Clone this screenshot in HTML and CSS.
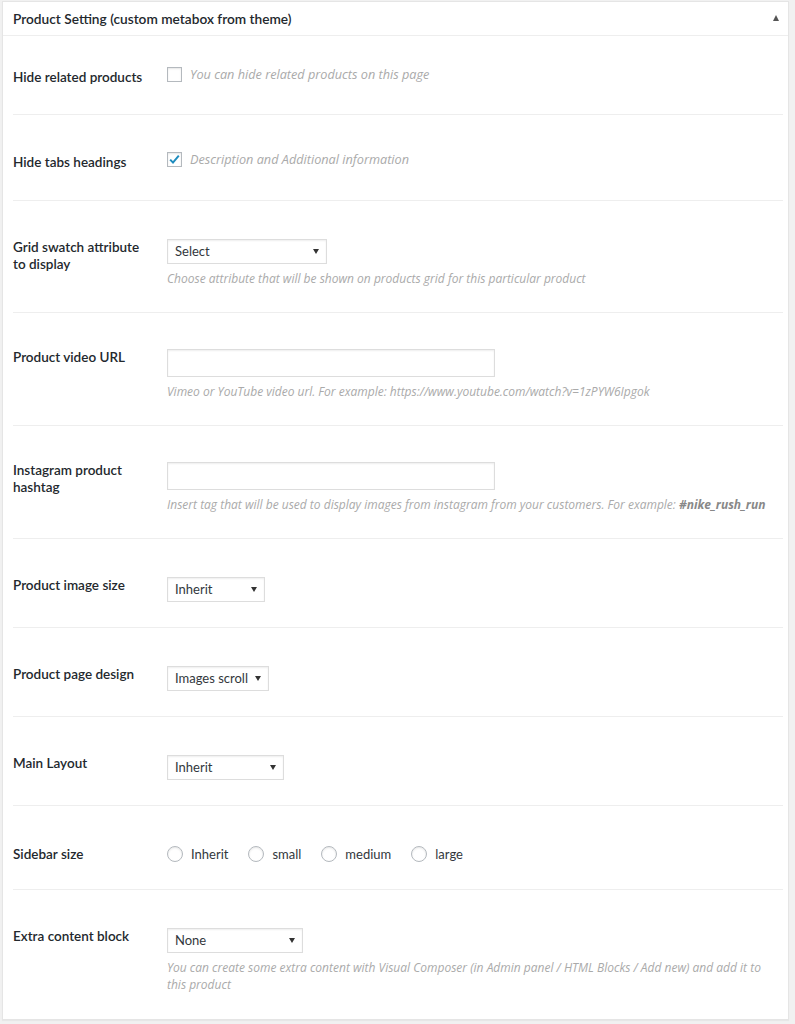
FILE: index.html
```html
<!DOCTYPE html>
<html lang="en">
<head>
    <meta charset="UTF-8">
    <meta name="viewport" content="width=device-width, initial-scale=1.0">
    <title>Product Setting</title>

    <link rel="stylesheet" href="styles.css">
</head>
<body>
    <div class="metabox">
        <div class="metabox-head">
            <h2>Product Setting (custom metabox from theme)</h2>
            <span class="toggle"></span>
        </div>
        <div class="metabox-body">
            <div class="field field-check field-first">
                <div class="field-label">Hide related products</div>
                <div class="field-control">
                    <label class="check">
                        <span class="box"></span>
                        <span class="check-text">You can hide related products on this page</span>
                    </label>
                </div>
            </div>

            <div class="field field-check">
                <div class="field-label">Hide tabs headings</div>
                <div class="field-control">
                    <label class="check">
                        <span class="box">
                            <svg width="13" height="13" viewBox="0 0 13 13"><path d="M2.2 6.6 L5 9.6 L10.8 2.6" fill="none" stroke="#1e8cbe" stroke-width="2"/></svg>
                        </span>
                        <span class="check-text">Description and Additional information</span>
                    </label>
                </div>
            </div>

            <div class="field">
                <div class="field-label">Grid swatch attribute to display</div>
                <div class="field-control">
                    <div class="select select-160">Select</div>
                    <p class="desc">Choose attribute that will be shown on products grid for this particular product</p>
                </div>
            </div>

            <div class="field field-input">
                <div class="field-label">Product video URL</div>
                <div class="field-control">
                    <input type="text" class="text-input">
                    <p class="desc">Vimeo or YouTube video url. For example: https://www.youtube.com/watch?v=1zPYW6Ipgok</p>
                </div>
            </div>

            <div class="field field-input">
                <div class="field-label">Instagram product hashtag</div>
                <div class="field-control">
                    <input type="text" class="text-input">
                    <p class="desc">Insert tag that will be used to display images from instagram from your customers. For example: <b>#nike_rush_run</b></p>
                </div>
            </div>

            <div class="field">
                <div class="field-label">Product image size</div>
                <div class="field-control">
                    <div class="select select-98">Inherit</div>
                </div>
            </div>

            <div class="field">
                <div class="field-label">Product page design</div>
                <div class="field-control">
                    <div class="select select-102">Images scroll</div>
                </div>
            </div>

            <div class="field">
                <div class="field-label">Main Layout</div>
                <div class="field-control">
                    <div class="select select-117">Inherit</div>
                </div>
            </div>

            <div class="field field-radio">
                <div class="field-label">Sidebar size</div>
                <div class="field-control radios">
                    <label class="radio"><span class="dot"></span>Inherit</label>
                    <label class="radio"><span class="dot"></span>small</label>
                    <label class="radio"><span class="dot"></span>medium</label>
                    <label class="radio"><span class="dot"></span>large</label>
                </div>
            </div>

            <div class="field">
                <div class="field-label">Extra content block</div>
                <div class="field-control">
                    <div class="select select-136">None</div>
                    <p class="desc">You can create some extra content with Visual Composer (in Admin panel / HTML Blocks / Add new) and add it to this product</p>
                </div>
            </div>
        </div>
    </div>
</body>
</html>
```

FILE: styles.css
```css
* {
    margin: 0;
    padding: 0;
    box-sizing: border-box;
}
body {
    background-color: #f1f1f1;
    font-family: Lato, "Open Sans", sans-serif;
    color: #23282d;
    padding: 1px 6px 4px 2px;
}
.metabox {
    background-color: #fff;
    border: 1px solid #e5e5e5;
    box-shadow: 0 1px 1px rgba(0, 0, 0, 0.04);
}
.metabox-head {
    height: 34px;
    display: flex;
    align-items: center;
    justify-content: space-between;
    padding: 0 9px 0 10px;
    border-bottom: 1px solid #eee;
}
.metabox-head h2 {
    font-size: 13.7px;
    font-weight: 600;
    color: #23282d;
}
.toggle {
    width: 0;
    height: 0;
    border-left: 3.5px solid transparent;
    border-right: 3.5px solid transparent;
    border-bottom: 6px solid #555;
    margin-top: -2px;
}
.metabox-body {
    padding: 0 5px 0 10px;
}
.field {
    display: flex;
    padding: 38px 0 25px;
    border-bottom: 1px solid #eee;
}
.field:last-child {
    border-bottom: none;
    padding-bottom: 26px;
}
.field-label {
    width: 154px;
    flex-shrink: 0;
    padding-right: 18px;
    font-size: 13.5px;
    font-weight: 600;
    line-height: 17px;
}
.field-control {
    flex: 1;
}

/* checkbox rows */
.field-check {
    padding: 39px 0 29px;
}
.field-check.field-first {
    padding: 33px 0 28px;
}
.field-check .field-control {
    margin-top: -3px;
}
.check {
    display: flex;
    align-items: center;
}
.box {
    width: 15px;
    height: 15px;
    border: 1px solid #b4b9be;
    box-shadow: inset 0 1px 2px rgba(0, 0, 0, 0.1);
    background: #fff;
    display: flex;
    align-items: center;
    justify-content: center;
    flex-shrink: 0;
}
.check-text {
    margin-left: 8px;
    font-family: "Open Sans", sans-serif;
    font-size: 12.7px;
    font-style: italic;
    line-height: 17px;
    color: #aaa;
}

/* selects and inputs */
.select {
    position: relative;
    height: 25px;
    border: 1px solid #ddd;
    box-shadow: inset 0 1px 2px rgba(0, 0, 0, 0.07);
    background: #fff;
    font-size: 13px;
    line-height: 23px;
    color: #32373c;
    padding-left: 7px;
}
.select::after {
    content: "";
    position: absolute;
    right: 7px;
    top: 9px;
    border-left: 3px solid transparent;
    border-right: 3px solid transparent;
    border-top: 5px solid #333;
}
.select-160 { width: 160px; }
.select-98 { width: 98px; }
.select-102 { width: 102px; }
.select-117 { width: 117px; }
.select-136 { width: 136px; }

.field-input {
    padding-top: 36px;
}
.text-input {
    display: block;
    width: 328px;
    height: 28px;
    border: 1px solid #ddd;
    box-shadow: inset 0 1px 2px rgba(0, 0, 0, 0.07);
    background: #fff;
    outline: none;
}
.desc {
    margin-top: 6px;
    font-family: "Open Sans", sans-serif;
    font-size: 12px;
    font-style: italic;
    line-height: 17px;
    color: #aaa;
}
.desc b {
    color: #888;
    font-weight: 700;
}

/* radio row */
.field-radio {
    align-items: center;
    padding: 37px 0 24px;
}
.field-radio .field-label {
    line-height: 22px;
}
.radios {
    display: flex;
    align-items: center;
    gap: 20px;
    height: 22px;
}
.radio {
    display: flex;
    align-items: center;
    font-size: 13px;
    color: #32373c;
}
.dot {
    width: 16px;
    height: 16px;
    border-radius: 50%;
    border: 1px solid #b4b9be;
    box-shadow: inset 0 1px 2px rgba(0, 0, 0, 0.1);
    margin-right: 8px;
}
```
